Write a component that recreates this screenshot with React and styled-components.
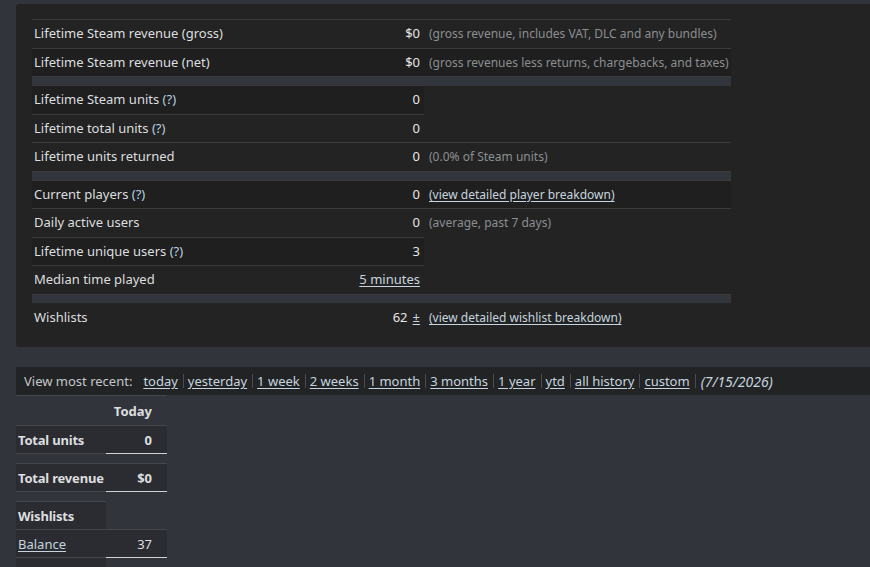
import React from 'react';
import styled, { createGlobalStyle } from 'styled-components';

const GlobalStyle = createGlobalStyle`
  body {
    margin: 0;
    background: #31343b;
    font-family: "Noto Sans", "Liberation Sans", sans-serif;
    font-size: 13px;
    color: #dcdedf;
  }
`;

const Page = styled.div`
  padding-top: 4px;
  padding-left: 16px;
  width: 854px;
`;

const Panel = styled.section`
  background: #232323;
  border-radius: 3px 0 0 3px;
  padding: 15px 16px 16px 16px;
`;

const StatsTable = styled.table`
  border-collapse: collapse;
  table-layout: fixed;
  width: 699px;
`;

const Cell = styled.td`
  padding: 5px 2px 5px 2px;
  line-height: 17.5px;
  border-top: 1px solid ${(p) => (p.$noBorder ? 'transparent' : '#3b3b3b')};
  background: ${(p) => (p.$dark ? '#1f1f1f' : '#232323')};
  white-space: nowrap;
`;

const ValueCell = styled(Cell)`
  text-align: right;
  padding-right: 4px;
  color: #e6e6e6;
`;

const NoteCell = styled(Cell)`
  padding-left: 5px;
  font-size: 12px;
  color: #8b8e91;
`;

const SepCell = styled.td`
  height: 8px;
  padding: 0;
  background: #32353b;
  border-top: 1px solid #3b3b3b;
`;

const Help = styled.span`
  color: #b8cfe0;
`;

const Link = styled.a`
  color: #c6d4df;
  text-decoration: underline;
  text-underline-offset: 2px;
  cursor: pointer;
`;

const Plus = styled(Link)`
  margin-left: 5px;
`;

const RangeBar = styled.nav`
  margin-top: 20px;
  background: #222325;
  height: 28px;
  display: flex;
  align-items: center;
  padding-left: 8px;
  color: #c4c6c8;
`;

const RangeLabel = styled.span`
  margin-right: 11px;
`;

const RangeLink = styled(Link)`
  color: #c6d4df;
`;

const Divider = styled.span`
  width: 1px;
  height: 14px;
  background: #4a4c50;
  margin: 0 4px 0 5px;
`;

const DateNote = styled.span`
  font-style: italic;
  font-size: 14px;
  margin-left: 1px;
  color: #c6d4df;
`;

const SummaryTable = styled.table`
  border-collapse: collapse;
  width: 151px;
`;

const HeadCell = styled.th`
  height: 29px;
  padding: 0 15px 0 2px;
  text-align: right;
  font-weight: 700;
  color: #dcdedf;
  border-top: 1px solid ${(p) => (p.$line ? '#44474d' : 'transparent')};
`;

const SumLabel = styled.td`
  width: 86px;
  height: 27px;
  padding: 0 2px;
  background: #2a2c31;
  border-top: 1px solid #44474d;
  border-bottom: 1px solid #44474d;
  font-weight: ${(p) => (p.$bold ? 700 : 400)};
  letter-spacing: ${(p) => (p.$bold ? '-0.2px' : '0')};
  white-space: nowrap;
`;

const SumValue = styled.td`
  width: 46px;
  padding: 0 15px 0 0;
  text-align: right;
  background: #2a2c31;
  border-top: 1px solid #44474d;
  border-bottom: 1px solid #cfd1d3;
  font-weight: ${(p) => (p.$bold ? 700 : 400)};
`;

const Spacer = styled.td`
  height: 9px;
  padding: 0;
`;

const statGroups = [
  [
    { label: 'Lifetime Steam revenue (gross)', value: '$0', note: '(gross revenue, includes VAT, DLC and any bundles)' },
    { label: 'Lifetime Steam revenue (net)', value: '$0', note: '(gross revenues less returns, chargebacks, and taxes)', dark: true },
  ],
  [
    { label: 'Lifetime Steam units', help: true, value: '0', dark: true },
    { label: 'Lifetime total units', help: true, value: '0' },
    { label: 'Lifetime units returned', value: '0', note: '(0.0% of Steam units)' },
  ],
  [
    { label: 'Current players', help: true, value: '0', link: '(view detailed player breakdown)', dark: true },
    { label: 'Daily active users', value: '0', note: '(average, past 7 days)' },
    { label: 'Lifetime unique users', help: true, value: '3', dark: true },
    { label: 'Median time played', valueLink: '5 minutes' },
  ],
  [
    { label: 'Wishlists', value: '62', plus: true, link: '(view detailed wishlist breakdown)', noBorder: true },
  ],
];

const ranges = ['today', 'yesterday', '1 week', '2 weeks', '1 month', '3 months', '1 year', 'ytd', 'all history', 'custom'];

function StatRow({ row }) {
  return (
    <tr>
      <Cell $dark={row.dark} $noBorder={row.noBorder}>
        {row.label}
        {row.help && <Help> (?)</Help>}
      </Cell>
      <ValueCell $dark={row.dark} $noBorder={row.noBorder}>
        {row.valueLink ? <Link>{row.valueLink}</Link> : row.value}
        {row.plus && <Plus>±</Plus>}
      </ValueCell>
      {(row.note || row.link) && (
        <NoteCell $dark={row.dark} $noBorder={row.noBorder}>
          {row.link ? <Link>{row.link}</Link> : row.note}
        </NoteCell>
      )}
    </tr>
  );
}

export default function App() {
  return (
    <Page>
      <GlobalStyle />
      <Panel>
        <StatsTable>
          <colgroup>
            <col style={{ width: 320 }} />
            <col style={{ width: 72 }} />
            <col style={{ width: 307 }} />
          </colgroup>
          {statGroups.map((group, gi) => (
            <tbody key={gi}>
              {gi > 0 && (
                <tr>
                  <SepCell colSpan={3} />
                </tr>
              )}
              {group.map((row) => (
                <StatRow key={row.label} row={row} />
              ))}
            </tbody>
          ))}
        </StatsTable>
      </Panel>

      <RangeBar>
        <RangeLabel>View most recent:</RangeLabel>
        {ranges.map((r) => (
          <React.Fragment key={r}>
            <RangeLink>{r}</RangeLink>
            <Divider />
          </React.Fragment>
        ))}
        <DateNote>(7/15/2026)</DateNote>
      </RangeBar>

      <SummaryTable>
        <tbody>
          <tr>
            <HeadCell $line />
            <HeadCell $line>Today</HeadCell>
          </tr>
          <tr>
            <SumLabel $bold>Total units</SumLabel>
            <SumValue $bold>0</SumValue>
          </tr>
          <tr><Spacer colSpan={2} /></tr>
          <tr>
            <SumLabel $bold>Total revenue</SumLabel>
            <SumValue $bold>$0</SumValue>
          </tr>
          <tr><Spacer colSpan={2} /></tr>
          <tr>
            <SumLabel $bold>Wishlists</SumLabel>
          </tr>
          <tr>
            <SumLabel><Link>Balance</Link></SumLabel>
            <SumValue>37</SumValue>
          </tr>
          <tr>
            <SumLabel>&nbsp;</SumLabel>
          </tr>
        </tbody>
      </SummaryTable>
    </Page>
  );
}
